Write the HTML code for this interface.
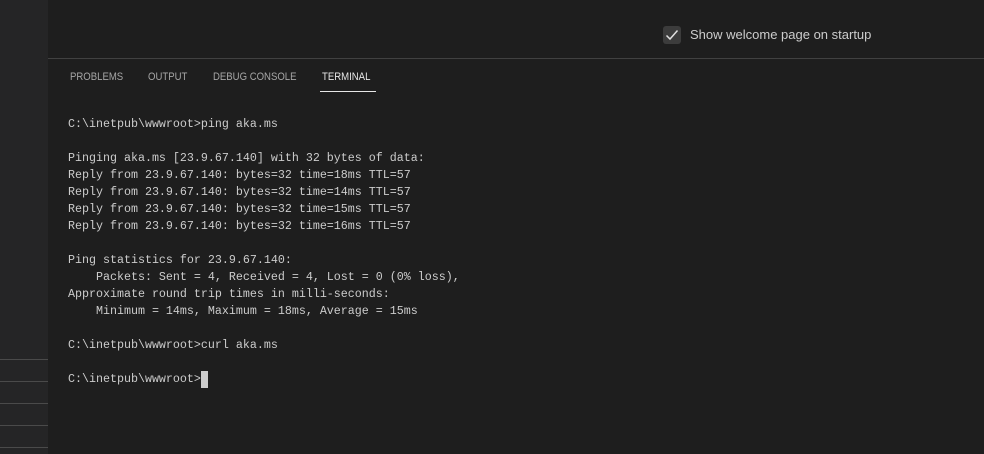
<!DOCTYPE html>
<html><head><style>
html,body{margin:0;padding:0;width:984px;height:454px;overflow:hidden;background:#1e1e1e;}
.side{position:absolute;left:0;top:0;width:48px;height:454px;background:#252526;}
.side div{position:absolute;left:0;width:48px;height:1px;background:#4a4a4a;}
.sep{position:absolute;left:48px;top:58px;width:936px;height:1px;background:#414141;}
.cb{position:absolute;left:663px;top:26px;width:18px;height:18px;background:#3c3c3c;border-radius:3px;}
.lbl{position:absolute;left:690px;top:27px;font:13px "Liberation Sans",sans-serif;color:#cccccc;}
.tab{position:absolute;top:71px;font:11px "Liberation Sans",sans-serif;color:#a6a6a6;transform:scaleX(0.87);transform-origin:0 0;white-space:nowrap;}
.ul{position:absolute;left:320px;top:91px;width:56px;height:1px;background:#e7e7e7;}
pre{position:absolute;left:68px;top:116px;margin:0;font:11.67px/17px "Liberation Mono",monospace;color:#cccccc;}
.cur{display:inline-block;width:7px;height:17px;background:#cccccc;vertical-align:top;}
</style></head><body>
<div class="side">
<div style="top:359px"></div><div style="top:381px"></div><div style="top:403px"></div><div style="top:425px"></div><div style="top:447px"></div>
</div>
<div class="cb"><svg width="18" height="18" viewBox="0 0 18 18"><path d="M3.5 9.5 L7 13 L14.5 4.5" fill="none" stroke="#e0e0e0" stroke-width="1.5"/></svg></div>
<div class="lbl">Show welcome page on startup</div>
<div class="sep"></div>
<div class="tab" style="left:70px">PROBLEMS</div>
<div class="tab" style="left:148px">OUTPUT</div>
<div class="tab" style="left:213px">DEBUG CONSOLE</div>
<div class="tab" style="left:322px;color:#e7e7e7">TERMINAL</div>
<div class="ul"></div>
<pre>C:\inetpub\wwwroot&gt;ping aka.ms

Pinging aka.ms [23.9.67.140] with 32 bytes of data:
Reply from 23.9.67.140: bytes=32 time=18ms TTL=57
Reply from 23.9.67.140: bytes=32 time=14ms TTL=57
Reply from 23.9.67.140: bytes=32 time=15ms TTL=57
Reply from 23.9.67.140: bytes=32 time=16ms TTL=57

Ping statistics for 23.9.67.140:
    Packets: Sent = 4, Received = 4, Lost = 0 (0% loss),
Approximate round trip times in milli-seconds:
    Minimum = 14ms, Maximum = 18ms, Average = 15ms

C:\inetpub\wwwroot&gt;curl aka.ms

C:\inetpub\wwwroot&gt;<span class="cur"></span></pre>
</body></html>
